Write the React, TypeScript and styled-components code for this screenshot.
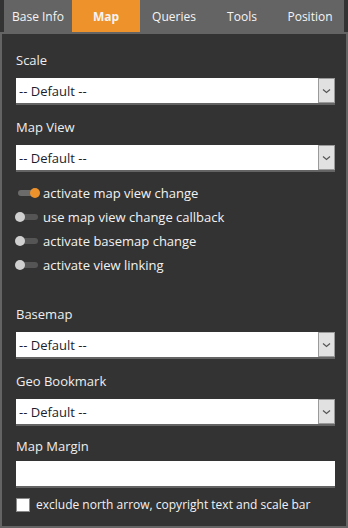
import styled, { createGlobalStyle } from "styled-components";

const GlobalStyle = createGlobalStyle`
  html, body {
    margin: 0;
    padding: 0;
    background: #333333;
  }
  body {
    font-family: "Open Sans", "Noto Sans", sans-serif;
  }
`;

const Shell = styled.div`
  width: 348px;
  height: 528px;
  display: flex;
  flex-direction: column;
  background: #333333;
`;

const TabBar = styled.div`
  display: flex;
  height: 32px;
  margin: 0 4px;
  background: #646464;
`;

const Tab = styled.div<{ active?: boolean }>`
  flex: 1;
  display: flex;
  align-items: center;
  justify-content: center;
  font-size: 12px;
  font-weight: ${(p) => (p.active ? 700 : 400)};
  color: #f4f4f4;
  background: ${(p) => (p.active ? "#ee922c" : "transparent")};
`;

const Panel = styled.div`
  flex: 1;
  display: flex;
  flex-direction: column;
  border: 2px solid #646464;
  padding: 16px 11px 0 14px;
`;

const Label = styled.div<{ gap?: number; mb?: number }>`
  height: 20px;
  line-height: 20px;
  font-size: 13px;
  color: #eeeeee;
  margin-top: ${(p) => p.gap ?? 0}px;
  margin-bottom: ${(p) => p.mb ?? 8}px;
`;

const SelectBox = styled.div`
  display: flex;
  height: 25px;
  background: #ffffff;
  border-bottom: 2px solid #646464;
`;

const SelectText = styled.div`
  flex: 1;
  display: flex;
  align-items: center;
  padding-left: 3px;
  font-size: 13px;
  color: #1c1c2c;
`;

const ArrowBox = styled.div`
  width: 15px;
  display: flex;
  align-items: center;
  justify-content: center;
  background: #e1e1e1;
  border: 1px solid #9a9a9a;
`;

const TextInput = styled.div`
  height: 25px;
  background: #ffffff;
  border-bottom: 2px solid #646464;
`;

const ToggleList = styled.div`
  display: flex;
  flex-direction: column;
  margin-top: 9px;
`;

const ToggleRow = styled.div`
  height: 24px;
  display: flex;
  align-items: center;
  gap: 5px;
  font-size: 13px;
  color: #f2f2f2;
`;

const Switch = styled.span<{ on?: boolean }>`
  position: relative;
  width: 20px;
  height: 6px;
  margin-left: 2px;
  border-radius: 3px;
  background: ${(p) => (p.on ? "#6b6b6b" : "#555555")};
  &::after {
    content: "";
    position: absolute;
    top: -2px;
    left: ${(p) => (p.on ? "12px" : "-3px")};
    width: 10px;
    height: 10px;
    border-radius: 50%;
    background: ${(p) => (p.on ? "#ee922c" : "#d0d0d0")};
  }
`;

const CheckRow = styled.label`
  display: flex;
  align-items: center;
  gap: 6px;
  margin-top: 8px;
  font-size: 12px;
  color: #f2f2f2;
`;

const CheckBox = styled.span`
  width: 12px;
  height: 12px;
  background: #ffffff;
  border: 1px solid #8a8a8a;
`;

const Chevron = () => (
  <svg width="9" height="6" viewBox="0 0 9 6">
    <path d="M1 1.5 L4.5 4.5 L8 1.5" fill="none" stroke="#555" strokeWidth="1.2" />
  </svg>
);

const Select = () => (
  <SelectBox>
    <SelectText>-- Default --</SelectText>
    <ArrowBox>
      <Chevron />
    </ArrowBox>
  </SelectBox>
);

const tabs = ["Base Info", "Map", "Queries", "Tools", "Position"];

const toggles = [
  { label: "activate map view change", on: true },
  { label: "use map view change callback", on: false },
  { label: "activate basemap change", on: false },
  { label: "activate view linking", on: false },
];

const App = () => {
  return (
    <Shell>
      <GlobalStyle />
      <TabBar>
        {tabs.map((t) => (
          <Tab key={t} active={t === "Map"}>
            {t}
          </Tab>
        ))}
      </TabBar>
      <Panel>
        <Label>Scale</Label>
        <Select />
        <Label gap={12}>Map View</Label>
        <Select />
        <ToggleList>
          {toggles.map((t) => (
            <ToggleRow key={t.label}>
              <Switch on={t.on} />
              {t.label}
            </ToggleRow>
          ))}
        </ToggleList>
        <Label gap={27}>Basemap</Label>
        <Select />
        <Label gap={12}>Geo Bookmark</Label>
        <Select />
        <Label gap={10} mb={5}>
          Map Margin
        </Label>
        <TextInput />
        <CheckRow>
          <CheckBox />
          exclude north arrow, copyright text and scale bar
        </CheckRow>
      </Panel>
    </Shell>
  );
};

export default App;
